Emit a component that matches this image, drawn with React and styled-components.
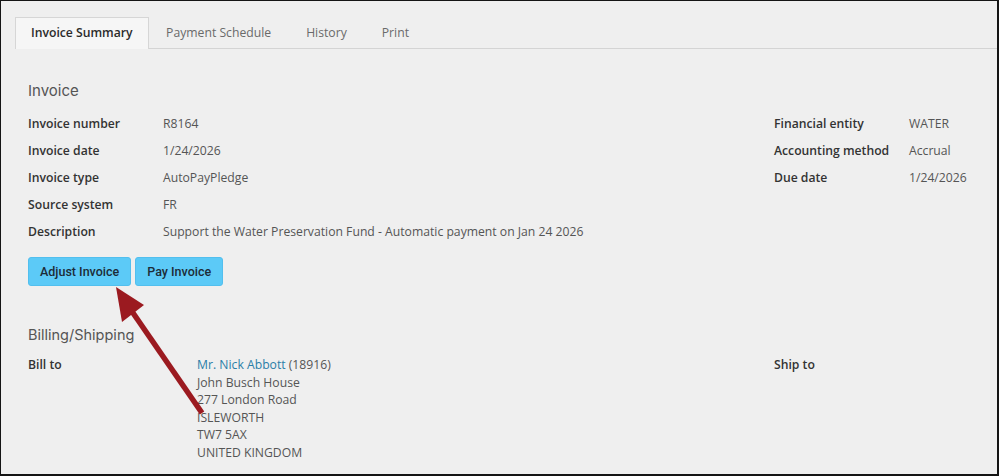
import React from "react";
import styled, { createGlobalStyle } from "styled-components";

const GlobalStyle = createGlobalStyle`
  html, body { margin: 0; padding: 0; background: #efefef; }
  * { box-sizing: border-box; }
`;

const Frame = styled.div`
  position: relative;
  width: 999px;
  height: 476px;
  background: #efefef;
  border-style: solid;
  border-color: #141414;
  border-width: 1px 2px 2px 1px;
  padding: 16px 0 0 14px;
  font-family: "Open Sans", "Liberation Sans", sans-serif;
  overflow: hidden;
`;

const TabBar = styled.div`
  display: flex;
  height: 32px;
  border-bottom: 1px solid #d4d4d4;
`;

const Tab = styled.div`
  display: flex;
  align-items: center;
  height: 32px;
  padding: 0 ${(p) => p.$pad}px 2px;
  font-size: 12.2px;
  color: ${(p) => (p.$active ? "#2b2b2b" : "#6a6a6a")};
  font-weight: ${(p) => (p.$active ? 600 : 400)};
  background: ${(p) => (p.$active ? "#f6f6f6" : "transparent")};
  border: 1px solid ${(p) => (p.$active ? "#d6d6d6" : "transparent")};
  border-bottom: none;
  margin-bottom: -1px;
`;

const Content = styled.div`
  padding: 31px 0 0 13px;
`;

const SectionTitle = styled.div`
  font-family: Inter, "Noto Sans", sans-serif;
  font-size: ${(p) => p.$size}px;
  line-height: 22px;
  color: #555;
  margin-top: ${(p) => p.$mt || 0}px;
`;

const TwoCols = styled.div`
  display: grid;
  grid-template-columns: 746px 1fr;
  margin-top: ${(p) => p.$mt || 0}px;
`;

const DefList = styled.div`
  display: grid;
  grid-template-columns: ${(p) => p.$label}px 1fr;
  grid-auto-rows: ${(p) => (p.$row ? `${p.$row}px` : "auto")};
  align-items: ${(p) => (p.$row ? "center" : "start")};
  font-size: 12.2px;
`;

const Label = styled.div`
  font-weight: 600;
  color: #333;
  line-height: 17.6px;
`;

const Value = styled.div`
  color: #555;
`;

const Address = styled.div`
  font-size: 12.2px;
  color: #555;
  line-height: 17.6px;
`;

const Link = styled.span`
  color: #2a7ea8;
`;

const ButtonRow = styled.div`
  display: flex;
  gap: 4px;
  margin-top: 12px;
`;

const Button = styled.button`
  height: 29px;
  padding: 0 ${(p) => p.$pad}px;
  background: #5ccaf7;
  border: 1px solid #52bfee;
  border-radius: 3px;
  font-family: Roboto, "Liberation Sans", sans-serif;
  font-weight: 500;
  font-size: 12.5px;
  color: #1d2c38;
  cursor: pointer;
`;

const Arrow = styled.svg`
  position: absolute;
  left: 0;
  top: 0;
  pointer-events: none;
`;

export default function App() {
  return (
    <>
      <GlobalStyle />
      <Frame>
        <TabBar>
          <Tab $active $pad={15}>Invoice Summary</Tab>
          <Tab $pad={16.5}>Payment Schedule</Tab>
          <Tab $pad={16.5}>History</Tab>
          <Tab $pad={16.5}>Print</Tab>
        </TabBar>
        <Content>
          <SectionTitle $size={15}>Invoice</SectionTitle>
          <TwoCols $mt={8}>
            <DefList $label={135} $row={27}>
              <Label>Invoice number</Label>
              <Value>R8164</Value>
              <Label>Invoice date</Label>
              <Value>1/24/2026</Value>
              <Label>Invoice type</Label>
              <Value>AutoPayPledge</Value>
              <Label>Source system</Label>
              <Value>FR</Value>
              <Label>Description</Label>
              <Value>Support the Water Preservation Fund - Automatic payment on Jan 24 2026</Value>
            </DefList>
            <DefList $label={135} $row={27}>
              <Label>Financial entity</Label>
              <Value>WATER</Value>
              <Label>Accounting method</Label>
              <Value>Accrual</Value>
              <Label>Due date</Label>
              <Value>1/24/2026</Value>
            </DefList>
          </TwoCols>
          <ButtonRow>
            <Button $pad={11}>Adjust Invoice</Button>
            <Button $pad={11}>Pay Invoice</Button>
          </ButtonRow>
          <SectionTitle $size={14.5} $mt={38}>Billing/Shipping</SectionTitle>
          <TwoCols $mt={10}>
            <DefList $label={169}>
              <Label>Bill to</Label>
              <Address>
                <Link>Mr. Nick Abbott</Link> (18916)
                <br />John Busch House
                <br />277 London Road
                <br />ISLEWORTH
                <br />TW7 5AX
                <br />UNITED KINGDOM
              </Address>
            </DefList>
            <DefList $label={135}>
              <Label>Ship to</Label>
              <Address />
            </DefList>
          </TwoCols>
        </Content>
        <Arrow width="999" height="476" viewBox="0 0 999 476">
          <line x1="201" y1="412" x2="130" y2="309" stroke="#9b1a20" strokeWidth="5.5" />
          <polygon points="115,286 143,304 121,321" fill="#9b1a20" />
        </Arrow>
      </Frame>
    </>
  );
}
